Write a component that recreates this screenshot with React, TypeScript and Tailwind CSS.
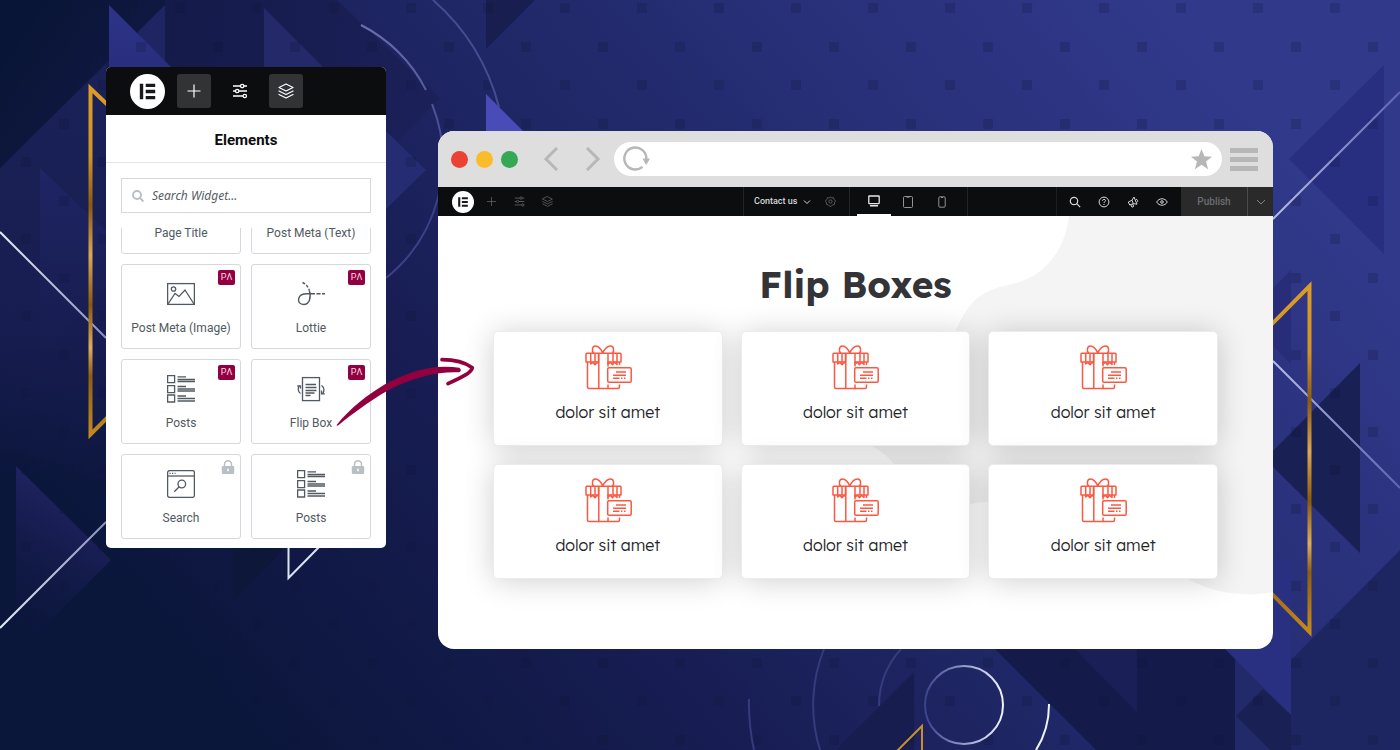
import React from "react";

type IconProps = { className?: string };

function Backdrop() {
  return (
    <svg
      className="absolute inset-0 h-full w-full"
      viewBox="0 0 1400 750"
      preserveAspectRatio="xMidYMid slice"
      aria-hidden="true"
    >
      <defs>
        <linearGradient id="base" gradientUnits="userSpaceOnUse" x1="220" y1="700" x2="1120" y2="-60">
          <stop offset="0" stopColor="#0b163b" />
          <stop offset="0.3" stopColor="#171d52" />
          <stop offset="0.55" stopColor="#202868" />
          <stop offset="0.8" stopColor="#2a327d" />
          <stop offset="1" stopColor="#31398b" />
        </linearGradient>
        <linearGradient id="corner" gradientUnits="userSpaceOnUse" x1="20" y1="30" x2="170" y2="130">
          <stop offset="0" stopColor="#091536" />
          <stop offset="1" stopColor="#131a49" />
        </linearGradient>
        <linearGradient id="bandTop" gradientUnits="userSpaceOnUse" x1="165" y1="60" x2="420" y2="100">
          <stop offset="0" stopColor="#141a49" />
          <stop offset="1" stopColor="#1b2158" />
        </linearGradient>
        <linearGradient id="violet" x1="0" y1="0" x2="0" y2="1">
          <stop offset="0" stopColor="#2d3388" />
          <stop offset="1" stopColor="#282d7b" />
        </linearGradient>
        <linearGradient id="leftBand" gradientUnits="userSpaceOnUse" x1="60" y1="100" x2="40" y2="480">
          <stop offset="0" stopColor="#1a2156" />
          <stop offset="0.6" stopColor="#171d50" />
          <stop offset="1" stopColor="#171d50" stopOpacity="0" />
        </linearGradient>
        <linearGradient id="fadeLeft" gradientUnits="userSpaceOnUse" x1="100" y1="520" x2="30" y2="640">
          <stop offset="0" stopColor="#1e225e" />
          <stop offset="1" stopColor="#131a48" stopOpacity="0" />
        </linearGradient>
        <linearGradient id="fadeSide" x1="0" y1="0" x2="0" y2="1">
          <stop offset="0" stopColor="#20266a" />
          <stop offset="1" stopColor="#1c2258" stopOpacity="0" />
        </linearGradient>
        <linearGradient id="gold" gradientUnits="userSpaceOnUse" x1="0" y1="85" x2="0" y2="440">
          <stop offset="0" stopColor="#dc9c26" />
          <stop offset="0.2" stopColor="#d29425" />
          <stop offset="0.34" stopColor="#8a5a10" />
          <stop offset="0.48" stopColor="#dba953" />
          <stop offset="0.62" stopColor="#8a5a08" />
          <stop offset="0.74" stopColor="#dfae5b" />
          <stop offset="0.82" stopColor="#8f5f0e" />
          <stop offset="1" stopColor="#c98d20" />
        </linearGradient>
        <linearGradient id="goldRight" href="#gold" gradientTransform="translate(0 196)" />
        <linearGradient id="lineLeft" x1="0" y1="0" x2="1" y2="0">
          <stop offset="0" stopColor="#e6edf8" />
          <stop offset="1" stopColor="#8b8fc0" />
        </linearGradient>
        <linearGradient id="lineRight" x1="0" y1="0" x2="1" y2="0">
          <stop offset="0" stopColor="#b6bde0" />
          <stop offset="1" stopColor="#6065b4" />
        </linearGradient>
        <linearGradient id="ring" x1="0" y1="0" x2="1" y2="0">
          <stop offset="0" stopColor="#3c4190" />
          <stop offset="1" stopColor="#f0f5ff" />
        </linearGradient>
        <linearGradient id="arc" gradientUnits="userSpaceOnUse" x1="361" y1="25" x2="441" y2="190">
          <stop offset="0" stopColor="#6a70ac" />
          <stop offset="1" stopColor="#3b4188" />
        </linearGradient>
        <pattern id="dots" width="77" height="77" patternUnits="userSpaceOnUse">
          <rect x="21" y="3" width="10" height="10" fill="#0d1436" />
          <rect x="59" y="42" width="10" height="10" fill="#0d1436" />
        </pattern>
      </defs>

      <rect width="1400" height="750" fill="url(#base)" />
      <path d="M0 168 106 64V548L0 500Z" fill="url(#leftBand)" />
      <path d="M0 0H165V5L0 168Z" fill="url(#corner)" />
      <path d="M165 0H337L440 98 380 160H165Z" fill="url(#bandTop)" />
      <path d="M138 32 165 5V67L150 67Z" fill="#1f2562" />
      <path d="M109 5 171 67V80H109Z" fill="url(#violet)" />
      <path d="M264 8 324 68H264Z" fill="#232969" />
      <path d="M386 131 426 170 386 209Z" fill="#252c72" />
      <path d="M40 168 106 231V290L40 356Z" fill="url(#fadeSide)" opacity="0.8" />
      <path d="M16 466 111 560 16 655Z" fill="url(#fadeLeft)" />
      <path d="M233 540H293L233 600Z" fill="#0c1739" />
      <path d="M486 0H535L486 49Z" fill="#181e50" />
      <path d="M486 94 530 138H486Z" fill="#484bb8" />
      <path d="M1384 65V254L1289 159Z" fill="#292f80" />
      <path d="M1291 270V364L1244 317Z" fill="#272d79" />
      <path d="M1360 363V553L1265 459Z" fill="#182054" />
      <path d="M1400 550V750H1180V660H1291Z" fill="#1e2662" />
      <path d="M995 649H1235V750H1096Z" fill="#141b4b" />
      <path d="M1075 649H1137V712Z" fill="#1a2057" />
      <path d="M1235 649H1291V750H1235Z" fill="#222a69" />
      <path d="M1225 649V560H1291V715Z" fill="#292f81" />
      <path d="M1236 716 1263 689 1291 715V750H1270Z" fill="#192054" />
      <path d="M914 672V750H836Z" fill="#171d4f" />

      <rect width="1400" height="750" fill="url(#dots)" opacity="0.22" />

      <g fill="none" strokeWidth="2">
        <path d="M361 25A151 151 0 0 1 426 90M432 104A151 151 0 0 1 386 278" stroke="url(#arc)" />
        <path d="M433 0A213 213 0 0 1 499 107" stroke="#464c92" />
        <path d="M0 232 106 338M0 628 106 522" stroke="url(#lineLeft)" />
        <path d="M288.500 545V578L321 545" stroke="#dce3f2" />
        <path d="M1273 219 1400 92M1273 361 1400 488" stroke="url(#lineRight)" />
        <circle cx="964" cy="705" r="39" stroke="url(#ring)" />
        <path d="M1049 704A85 85 0 0 1 1036 750" stroke="#eef3fb" />
        <path d="M901 649A85 85 0 0 0 879 706M824 649A151 151 0 0 0 820 750M749 699A215 215 0 0 0 754 750" stroke="#353b7c" />
        <path d="M896 752 922 726V752" stroke="#c98f2e" />
      </g>
      <g fill="none" strokeWidth="4">
        <path d="M112 109 90.500 88.500V434.500L112 413" stroke="url(#gold)" />
        <path d="M1268 328 1309.500 286V632L1268 590" stroke="url(#goldRight)" />
      </g>
    </svg>
  );
}

function LogoMark({ className }: IconProps) {
  return (
    <svg className={className} viewBox="0 0 35 35" aria-hidden="true">
      <circle cx="17.500" cy="17.500" r="17.500" fill="#fff" />
      <path d="M9.800 9.800h3.400v15.400H9.800zM15.700 9.800H25.200v3.300h-9.500zM15.700 15.800H25.200v3.400h-9.500zM15.700 21.900H25.200v3.300h-9.500z" fill="#17191c" />
    </svg>
  );
}

function PlusIcon({ className }: IconProps) {
  return (
    <svg className={className} viewBox="0 0 16 16" fill="none" stroke="currentColor" strokeWidth="1.200" aria-hidden="true">
      <path d="M8 1.500v13M1.500 8h13" />
    </svg>
  );
}

function SlidersIcon({ className }: IconProps) {
  return (
    <svg className={className} viewBox="0 0 16 16" fill="none" stroke="currentColor" strokeWidth="1.300" aria-hidden="true">
      <path d="M1 3h7.500M12 3h3M1 8h2.500M7 8h8M1 13h10" />
      <circle cx="10.200" cy="3" r="1.700" />
      <circle cx="5.200" cy="8" r="1.700" />
      <circle cx="12.800" cy="13" r="1.700" />
    </svg>
  );
}

function LayersIcon({ className }: IconProps) {
  return (
    <svg className={className} viewBox="0 0 16 16" fill="none" stroke="currentColor" strokeWidth="1.200" strokeLinejoin="round" strokeLinecap="round" aria-hidden="true">
      <path d="M8 1 15 4.500 8 8 1 4.500zM1 8l7 3.500L15 8M1 11.500 8 15l7-3.500" />
    </svg>
  );
}

function ImageIcon() {
  return (
    <svg className="h-7 w-7" viewBox="0 0 28 28" fill="none" stroke="#515962" strokeWidth="1.300" aria-hidden="true">
      <rect x="0.600" y="3.600" width="26.800" height="20.800" />
      <circle cx="6.500" cy="9" r="2.200" />
      <path d="M1 24 8 13.500 12 16.500 18 10 27 24" />
    </svg>
  );
}

function LottieIcon() {
  return (
    <svg className="h-7 w-7" viewBox="0 0 28 28" fill="none" stroke="#515962" strokeWidth="1.400" aria-hidden="true">
      <path d="M5.500 2.500C9 4 11.300 7 12.300 10.500" strokeDasharray="3 1.500" />
      <path d="M12.300 10.500C14.500 17 12.500 24.500 6.800 24.500 2.500 24.500 1 21.500 1.700 18.500 2.600 15 6 13.800 10 13.800H14" />
      <path d="M14 13.800H28" strokeDasharray="4 1.500" />
    </svg>
  );
}

function PostsIcon() {
  return (
    <svg className="h-7 w-7" viewBox="0 0 28 28" fill="none" stroke="#515962" strokeWidth="1.300" aria-hidden="true">
      <path d="M.6.600h7v7h-7zM.6 10.600h7v7h-7zM.6 20h7v7h-7z" />
      <path d="M10.500 1.800H19M10.500 4.500H28M10.500 6.500H28M10.500 11.500H19M10.500 14H28M10.500 16H28M10.500 21H19M10.500 23.500H28M10.500 26H28" />
    </svg>
  );
}

function FlipIcon() {
  return (
    <svg className="h-7 w-7" viewBox="0 0 28 28" fill="none" stroke="#515962" strokeWidth="1.300" aria-hidden="true">
      <rect x="5.500" y="2.600" width="17" height="23" />
      <path d="M8.500 9.500h10.500M8.500 12.500h11M8.500 15.500h11M8.500 18h9M8.500 20.500h5" />
      <path d="M3.500 18.500C.5 16.500.8 12.500 2.500 10.800M.2 10.800H3.500V13.500M24.500 10.500C27.500 12.500 27.500 16 25.800 18.300M27.800 18.800H24.500V15.500" />
    </svg>
  );
}

function SearchPageIcon() {
  return (
    <svg className="h-7 w-7" viewBox="0 0 28 28" fill="none" stroke="#515962" strokeWidth="1.300" aria-hidden="true">
      <rect x="0.600" y="0.600" width="26.800" height="26.800" rx="2" />
      <path d="M.6 6H27.400" />
      <path d="M2.500 3.300H8.500" strokeDasharray="1.200 1.300" />
      <circle cx="14.800" cy="14" r="3.800" />
      <path d="M12.200 16.800 7.300 21.700" />
    </svg>
  );
}

function LockIcon() {
  return (
    <svg className="h-[14px] w-[14px]" viewBox="0 0 14 14" aria-hidden="true">
      <path d="M3.500 7V4.300a3.500 3.500 0 0 1 7 0V7" fill="none" stroke="#babfc5" strokeWidth="1.500" />
      <rect x="0.800" y="6" width="12.400" height="8" rx="1.200" fill="#babfc5" />
      <path d="M7 8.800v2.500" stroke="#fff" strokeWidth="1.500" />
    </svg>
  );
}

function GiftIcon() {
  return (
    <svg className="h-[46px] w-12" viewBox="0 0 48 46" fill="none" stroke="#fb5842" strokeWidth="1.500" strokeLinejoin="round" aria-hidden="true">
      <path d="M2.700 9.200H36.300Q37 9.200 37 10V18H24V22.500M2 10V18H14.500V9.200M2 10Q2 9.200 2.700 9.200" />
      <path d="M18.800 9.200C17 5 14.500 2 11.500 2 8 2 7.500 7 9.700 9.200M18.800 9.200C20.500 5 23.500 2 26.500 2 30 2 30.500 7 28.300 9.200" />
      <path d="M6.700 9.200V20L9 18.300 11 20.800 13 18.300 15 19.500M14.800 9.200V45M24 9.200V20L26.500 18.300 28.500 20.800 30.500 18.300 33 20.500V9.200M29 9.200V18M11 9.200V18" />
      <path d="M3.500 18V43Q3.500 44.500 5 44.500H34Q35.500 44.500 35.500 43V40.500M24 40.500V44.500M35.500 18V21" />
      <rect x="23.700" y="23.700" width="23.500" height="14.600" rx="1.200" />
      <path d="M32 28H42M29 31.200H42M29 34.300H35.500M37 34.300H38.500M40 34.300H41.500" />
    </svg>
  );
}

type Widget = { label: string; icon?: React.ReactNode; mark?: "pa" | "lock" };

const widgets: Widget[] = [
  { label: "Page Title" },
  { label: "Post Meta (Text)" },
  { label: "Post Meta (Image)", icon: <ImageIcon />, mark: "pa" },
  { label: "Lottie", icon: <LottieIcon />, mark: "pa" },
  { label: "Posts", icon: <PostsIcon />, mark: "pa" },
  { label: "Flip Box", icon: <FlipIcon />, mark: "pa" },
  { label: "Search", icon: <SearchPageIcon />, mark: "lock" },
  { label: "Posts", icon: <PostsIcon />, mark: "lock" },
];

function WidgetCard({ label, icon, mark }: Widget) {
  return (
    <button className="relative flex h-[85px] flex-col items-center rounded-[3px] border border-[#d5d8dc] bg-white pt-[15px] text-xs text-[#515962]">
      <span className="flex h-7 items-center">{icon}</span>
      <span className="mt-3 leading-4">{label}</span>
      {mark === "pa" && (
        <span className="absolute top-[5px] right-[5px] flex h-[15px] w-[17px] items-center justify-center rounded-[2px] bg-[#93003f] text-[9px] leading-none text-[#f6dce8]">
          PΛ
        </span>
      )}
      {mark === "lock" && (
        <span className="absolute top-[5px] right-[5px]">
          <LockIcon />
        </span>
      )}
    </button>
  );
}

function ElementsPanel() {
  return (
    <aside className="mt-[67px] w-[280px] shrink-0 overflow-hidden rounded-[5px] bg-white pb-[9px]">
      <header className="flex h-12 items-center bg-[#0c0d0e] pl-6 text-white">
        <LogoMark className="h-[35px] w-[35px]" />
        <button aria-label="Add element" className="ml-3 flex h-[34px] w-[34px] items-center justify-center rounded-[3px] bg-[#323335]">
          <PlusIcon className="h-4 w-4" />
        </button>
        <button aria-label="Settings" className="ml-3 flex h-[34px] w-[34px] items-center justify-center">
          <SlidersIcon className="h-4 w-4" />
        </button>
        <button aria-label="Structure" className="ml-3 flex h-[34px] w-[34px] items-center justify-center rounded-[3px] bg-[#323335]">
          <LayersIcon className="h-4 w-4" />
        </button>
      </header>
      <h2 className="border-b border-[#e2e4e7] pt-[13px] pb-[10px] text-center text-[15px] leading-6 font-bold text-[#0c0d0e]">
        Elements
      </h2>
      <div className="px-[15px] pt-[15px]">
        <label className="flex h-[35px] items-center border border-[#d5d8dc] px-[10px]">
          <svg className="h-3 w-3" viewBox="0 0 12 12" fill="none" stroke="#babfc5" strokeWidth="1.900" aria-hidden="true">
            <circle cx="5" cy="5" r="4" />
            <path d="M8 8l3.500 3.500" />
          </svg>
          <input
            type="search"
            aria-label="Search Widget"
            placeholder="Search Widget..."
            className="ml-2 min-w-0 flex-1 bg-transparent font-['Noto_Sans',sans-serif] text-xs italic outline-none placeholder:text-[#555c63]"
          />
        </label>
        <div className="mt-[15px] overflow-hidden">
          <div className="-mt-[59px] grid grid-cols-2 gap-[10px]">
            {widgets.map((w, i) => (
              <WidgetCard key={i} {...w} />
            ))}
          </div>
        </div>
      </div>
    </aside>
  );
}

function BrowserBar() {
  return (
    <div className="flex h-14 items-center bg-[#dedede] pr-[15px] pl-[13px]">
      <div className="flex gap-2">
        <span className="h-[17px] w-[17px] rounded-full bg-[#ea4335]" />
        <span className="h-[17px] w-[17px] rounded-full bg-[#fbbc2c]" />
        <span className="h-[17px] w-[17px] rounded-full bg-[#34a853]" />
      </div>
      <button aria-label="Back" className="ml-6">
        <svg className="h-6 w-4" viewBox="0 0 16 24" fill="none" stroke="#b7b7b7" strokeWidth="3">
          <path d="M15 1 4 12l11 11" />
        </svg>
      </button>
      <button aria-label="Forward" className="ml-7">
        <svg className="h-6 w-4" viewBox="0 0 16 24" fill="none" stroke="#b7b7b7" strokeWidth="3">
          <path d="M1 1l11 11L1 23" />
        </svg>
      </button>
      <div className="ml-3 flex h-[34px] flex-1 items-center rounded-full bg-white pr-[10px] pl-2">
        <button aria-label="Reload">
          <svg className="h-7 w-7" viewBox="0 0 28 28" fill="none" stroke="#b7b7b7" strokeWidth="2.400">
            <path d="M20.500 21.800A11 11 0 1 1 24.300 14" />
            <path d="M20.500 13.500h7.500l-3.800 6.500z" fill="#b7b7b7" stroke="none" />
          </svg>
        </button>
        <input aria-label="Address" className="min-w-0 flex-1 bg-transparent px-3 text-sm outline-none" />
        <button aria-label="Bookmark">
          <svg className="h-[21px] w-[21px]" viewBox="0 0 20 20" fill="#b7b7b7">
            <path d="M10 0l2.700 7 7.300.3-5.700 4.600 2 7.300L10 15l-6.300 4.200 2-7.300L0 7.300 7.300 7z" />
          </svg>
        </button>
      </div>
      <button aria-label="Menu" className="ml-2 flex w-7 flex-col gap-1">
        <span className="h-[5px] bg-[#b7b7b7]" />
        <span className="h-[5px] bg-[#b7b7b7]" />
        <span className="h-[5px] bg-[#b7b7b7]" />
      </button>
    </div>
  );
}

function EditorBar() {
  return (
    <div className="grid h-[29px] grid-cols-[1fr_auto_1fr] bg-[#0c0d0e] text-[9px] text-[#d5d8dc]">
      <div className="flex items-center pl-[14px] text-[#5c5f63]">
        <LogoMark className="h-[22px] w-[22px]" />
        <button aria-label="Add" className="ml-3">
          <PlusIcon className="h-[11px] w-[11px]" />
        </button>
        <button aria-label="Settings" className="ml-[17px]">
          <SlidersIcon className="h-[11px] w-[11px]" />
        </button>
        <button aria-label="Structure" className="ml-[17px]">
          <LayersIcon className="h-[11px] w-[11px]" />
        </button>
      </div>
      <div className="flex w-[225px] border-x border-[#232426]">
        <div className="flex w-[106px] items-center border-r border-[#232426] pl-[10px]">
          <button className="flex items-center gap-[6px] font-medium">
            Contact us
            <svg className="h-2 w-2" viewBox="0 0 8 8" fill="none" stroke="currentColor">
              <path d="M1 2.500 4 5.500 7 2.500" />
            </svg>
          </button>
          <button aria-label="Page settings" className="ml-[14px] text-[#5f6266]">
            <svg className="h-[11px] w-[11px]" viewBox="0 0 24 24" fill="none" stroke="currentColor" strokeWidth="2">
              <circle cx="12" cy="12" r="3.500" />
              <path d="M12 1.500 14.500 4.500 18.500 3.500 20 7.500 23 11 21 14.500 20.500 18.500 16.500 19.500 13.500 22.500H10.500L7.500 19.500 3.500 18.500 3 14.500 1 11 4 7.500 5.500 3.500 9.500 4.500z" />
            </svg>
          </button>
        </div>
        <button aria-label="Desktop" className="ml-[7px] flex w-[34px] items-center justify-center border-b-2 border-white">
          <svg className="h-3 w-3" viewBox="0 0 12 12" fill="none" stroke="#e6e8ea" strokeWidth="1.300">
            <rect x="0.800" y="1" width="10.400" height="7.600" rx="0.500" />
            <path d="M2 10.800H10" strokeWidth="1.600" />
          </svg>
        </button>
        <button aria-label="Tablet" className="flex w-[34px] items-center justify-center">
          <svg className="h-3 w-[10px]" viewBox="0 0 10 12" fill="none" stroke="#8f9296">
            <rect x="0.500" y="0.500" width="9" height="11" rx="1" />
            <path d="M3.500 1.200h3" />
          </svg>
        </button>
        <button aria-label="Mobile" className="flex w-[34px] items-center justify-center">
          <svg className="h-3 w-2" viewBox="0 0 8 12" fill="none" stroke="#8f9296">
            <rect x="0.800" y="0.800" width="6.400" height="10.400" rx="1" />
            <path d="M3 1.500h2" />
          </svg>
        </button>
      </div>
      <div className="flex items-stretch justify-end">
        <div className="flex items-center gap-[17px] border-l border-[#1d1e20] pr-[13px] pl-3">
          <button aria-label="Find">
            <svg className="h-3 w-3" viewBox="0 0 12 12" fill="none" stroke="currentColor" strokeWidth="1.200">
              <circle cx="5" cy="5" r="3.700" />
              <path d="M7.700 7.700l3.500 3.500" />
            </svg>
          </button>
          <button aria-label="Help">
            <svg className="h-3 w-3" viewBox="0 0 12 12" fill="none" stroke="currentColor">
              <circle cx="6" cy="6" r="4.900" />
              <path d="M4.500 4.800C4.500 2.800 7.500 2.900 7.500 4.700 7.500 5.700 6 5.700 6 7M6 8v1" />
            </svg>
          </button>
          <button aria-label="What's new">
            <svg className="h-3 w-3" viewBox="0 0 12 12" fill="none" stroke="currentColor" strokeLinejoin="round">
              <path d="M7 1 10 8.200 6.300 7.600 2.700 9 1.300 6 5 4.200zM3.800 8.600 5 11.200 6.700 10.400 5.700 7.900M5 4.200 6.300 7.600M9 3.300A1.700 1.700 0 0 1 10.200 6.200" />
            </svg>
          </button>
          <button aria-label="Preview">
            <svg className="h-3 w-3" viewBox="0 0 12 12" fill="none" stroke="currentColor">
              <path d="M.7 6C3 1.700 9 1.700 11.300 6 9 10.300 3 10.300.7 6z" />
              <circle cx="6" cy="6" r="1.300" />
            </svg>
          </button>
        </div>
        <button className="w-[66px] bg-[#2a2a2b] text-[10px] font-medium text-[#6b6d70]">Publish</button>
        <button aria-label="Publish options" className="flex w-[26px] items-center justify-center border-l border-[#4a4b4d] bg-[#2a2a2b] text-[#808285]">
          <svg className="h-2 w-[10px]" viewBox="0 0 10 8" fill="none" stroke="currentColor">
            <path d="M1 2l4 4 4-4" />
          </svg>
        </button>
      </div>
    </div>
  );
}

function FlipCard() {
  return (
    <article className="flex h-[115px] flex-col items-center rounded-[5px] border border-[#ececec] bg-white pt-3 shadow-[0_2px_30px_rgba(0,0,0,0.19)]">
      <GiftIcon />
      <h3 className="mt-[10px] text-base leading-6 font-light text-[#252528]">dolor sit amet</h3>
    </article>
  );
}

function BrowserWindow() {
  return (
    <main className="mt-[131px] mr-[127px] flex-1 overflow-hidden rounded-2xl bg-white">
      <BrowserBar />
      <EditorBar />
      <section className="relative px-[55px] pt-[43px] pb-[70px] font-['Lexend','Inter',sans-serif]">
        <svg className="absolute inset-0 h-full w-full" viewBox="0 0 835 433" preserveAspectRatio="none" aria-hidden="true">
          <path
            d="M631 0C627 34 607 61 574 68 547 74 533 80 518 114 505 162 480 180 452 184 422 194 412 214 434 230 447 238 452 242 456 249 472 284 502 294 532 288 622 274 682 324 750 363 777 378 807 381 835 376V0Z"
            fill="#f4f4f4"
          />
        </svg>
        <div className="relative">
          <h1 className="text-center text-[37px] leading-[50px] font-bold text-[#333338]">Flip Boxes</h1>
          <div className="mt-[22px] grid grid-cols-3 gap-[18px]">
            {[0, 1, 2, 3, 4, 5].map((n) => (
              <FlipCard key={n} />
            ))}
          </div>
        </div>
      </section>
    </main>
  );
}

export default function App() {
  return (
    <div className="relative min-h-screen overflow-hidden bg-[#161c50] font-['Roboto',sans-serif]">
      <Backdrop />
      <div className="relative flex items-start gap-[52px] pb-12 pl-[106px]">
        <ElementsPanel />
        <BrowserWindow />
        <svg className="pointer-events-none absolute top-[350px] left-[330px] h-20 w-[150px]" viewBox="0 0 450 240" aria-hidden="true">
          <path
            d="M20 225C60 175 115 133 165 103 230 68 300 42 388 53Q397 60 388 67C330 64 255 78 175 121 110 158 65 195 27 224Q20 230 20 225Z"
            fill="#93003f"
          />
          <path d="M336 29C370 29 405 37 427 53 425 68 395 82 354 101" fill="none" stroke="#93003f" strokeWidth="11" strokeLinecap="round" strokeLinejoin="round" />
        </svg>
      </div>
    </div>
  );
}
